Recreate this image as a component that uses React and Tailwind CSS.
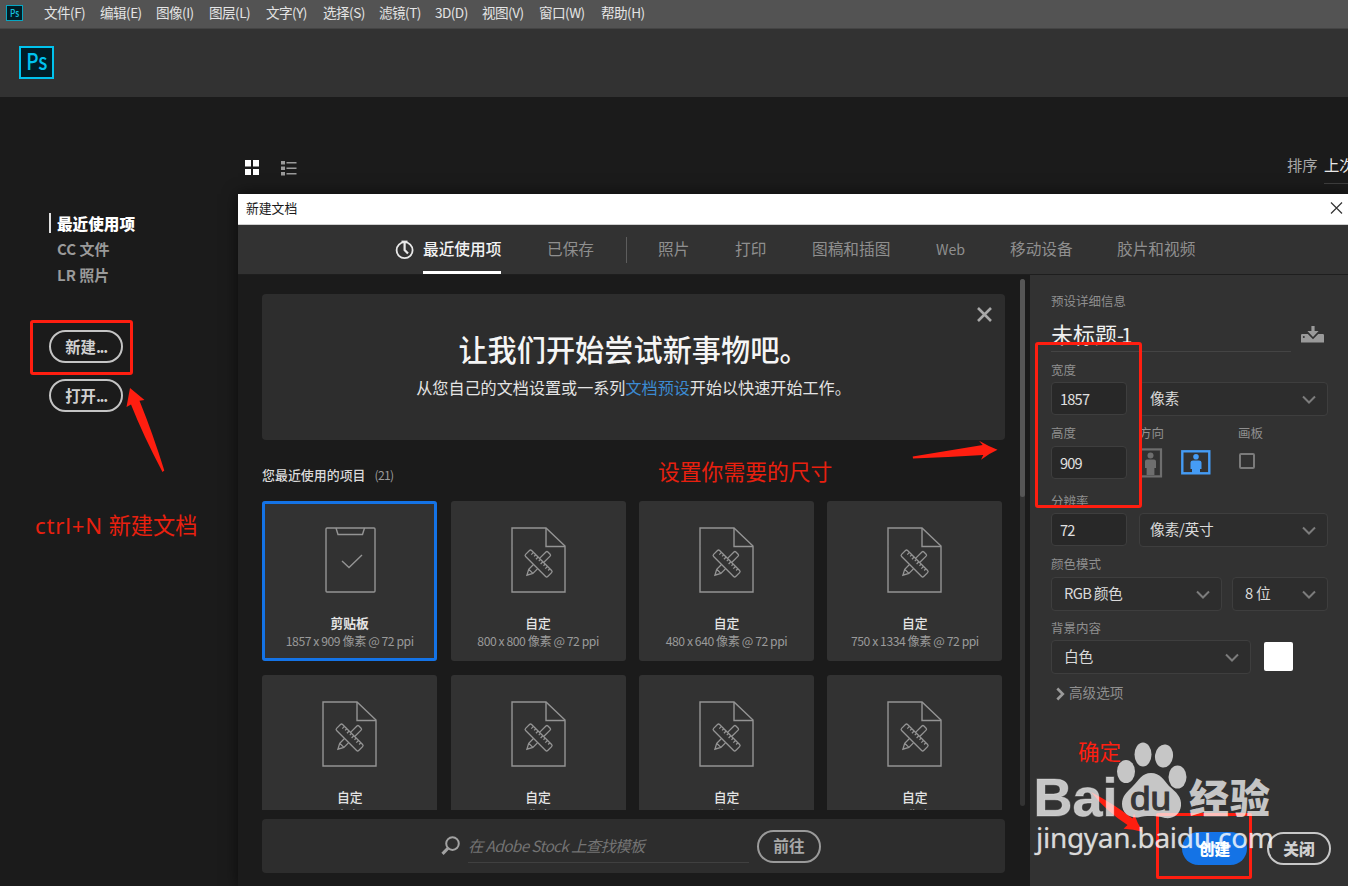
import React from 'react';

const MENU = [
  ['文件(F)', 'w-[56px]'],
  ['编辑(E)', 'w-[56px]'],
  ['图像(I)', 'w-[53px]'],
  ['图层(L)', 'w-[57px]'],
  ['文字(Y)', 'w-[57px]'],
  ['选择(S)', 'w-[56px]'],
  ['滤镜(T)', 'w-[56px]'],
  ['3D(D)', 'w-[47px]'],
  ['视图(V)', 'w-[57px]'],
  ['窗口(W)', 'w-[62px]'],
  ['帮助(H)', 'w-[60px]'],
];

const TABS = [
  ['照片', 'w-[77px]'],
  ['打印', 'w-[77px]'],
  ['图稿和插图', 'w-[124px]'],
  ['Web', 'w-[74px]'],
  ['移动设备', 'w-[107px]'],
  ['胶片和视频', 'w-[90px]'],
];

const CARDS = [
  { name: '剪贴板', size: '1857 x 909 像素 @ 72 ppi', clip: true },
  { name: '自定', size: '800 x 800 像素 @ 72 ppi' },
  { name: '自定', size: '480 x 640 像素 @ 72 ppi' },
  { name: '自定', size: '750 x 1334 像素 @ 72 ppi' },
  { name: '自定', size: '210 x 297 毫米 @ 300 ppi' },
  { name: '自定', size: '800 x 600 像素 @ 72 ppi' },
  { name: '自定', size: '600 x 800 像素 @ 72 ppi' },
  { name: '自定', size: '750 x 1000 像素 @ 72 ppi' },
];

function DocIcon() {
  return (
    <svg className="ml-px" width="56" height="66" viewBox="0 0 56 66" fill="none" stroke="#949494" strokeWidth="1.4">
      <path d="M1 1H35L54 19V65H1Z" />
      <path d="M35 1V19.5H54" />
      <g transform="translate(27.6 36.5) rotate(45) scale(0.92)" strokeWidth="1.4">
        <path d="M-3.2 -5V-14.5Q-3.2 -16 -1.7 -16H1.7Q3.2 -16 3.2 -14.5V-5" />
        <path d="M-3.2 5V12L0 18L3.2 12V5M-3.2 12H3.2M-1 16.5H1" />
        <rect x="-17" y="-4.6" width="34" height="9.2" rx="1.6" />
        <path d="M-12.5 -4.6V-1.2M-8.9 -4.6V-2M-5.3 -4.6V-1.2M-1.7 -4.6V-2M1.9 -4.6V-1.2M5.5 -4.6V-2M9.1 -4.6V-1.2M12.7 -4.6V-2" />
      </g>
    </svg>
  );
}

function ClipIcon() {
  return (
    <svg className="ml-[2px]" width="52" height="66" viewBox="0 0 52 66" fill="none" stroke="#949494" strokeWidth="1.4">
      <rect x="1" y="1" width="49" height="64" rx="1" />
      <path d="M11 1L13 7.5H37.5L39.5 1" />
      <path d="M17 34L24 40.5L37 28" />
    </svg>
  );
}

function Card({ card }) {
  return (
    <div
      className={
        'flex h-[160px] w-[175px] flex-col items-center rounded-[3px] bg-[#323232] pt-[26px] ' +
        (card.clip ? 'shadow-[inset_0_0_0_3px_#1473e6]' : '')
      }
    >
      {card.clip ? <ClipIcon /> : <DocIcon />}
      <div className={'mt-[20px] h-[20px] text-[12.8px] leading-[19px] text-[#e4e4e4] ' + (card.clip ? 'font-bold' : 'font-medium')}>
        {card.name}
      </div>
      <div className="h-[16px] whitespace-nowrap text-[12.2px] leading-[16px] tracking-[-0.45px] text-[#9a9a9a]">{card.size}</div>
    </div>
  );
}

function Chevron() {
  return (
    <svg className="mt-px" width="14" height="9" viewBox="0 0 14 9" fill="none" stroke="#7c7c7c" strokeWidth="2">
      <path d="M1 1.5L7 7.5L13 1.5" />
    </svg>
  );
}

function Select({ children, className }) {
  return (
    <div
      className={
        'flex h-[34px] items-center justify-between whitespace-nowrap rounded-[4px] border border-[#3e3e3e] bg-[#2d2d2d] pr-[11px] text-[14.8px] tracking-[-0.3px] text-[#dadada] ' +
        className
      }
    >
      <span className="pb-px">{children}</span>
      <Chevron />
    </div>
  );
}

function Field({ children }) {
  return (
    <div className="flex h-[33px] w-[76px] items-center rounded-[4px] border border-[#3e3e3e] bg-[#282828] pl-[8px] text-[14.6px] tracking-[-0.8px] text-[#e0e0e0]">
      {children}
    </div>
  );
}

function Label({ children, className = '' }) {
  return <div className={'whitespace-nowrap text-[12.5px] leading-[18px] text-[#8f8f8f] ' + className}>{children}</div>;
}

function Details() {
  return (
    <aside className="flex h-full w-[318px] flex-col bg-[#323232] pl-[21px]">
      <Label className="mt-[17px] h-[18px]">预设详细信息</Label>
      <div className="mt-[8px] flex h-[34px]">
        <div className="h-[34px] w-[240px] border-b border-[#444] text-[22px] leading-[31px] text-[#f0f0f0]">
          未标题<span className="text-[20px] tracking-[-2.8px]">-1</span>
        </div>
        <svg className="ml-[10px] mt-[8px]" width="24" height="17" viewBox="0 0 24 17">
          <path d="M10.4 0H13.6V5H17.6L12 11L6.4 5H10.4Z" fill="#9a9a9a" />
          <path d="M0 9.3Q0 8 1.3 8H6.8L12 13.3L17.2 8H21.8Q23 8 23 9.3V16.5H0Z" fill="#9a9a9a" />
          <circle cx="2.8" cy="11" r="1" fill="#323232" />
        </svg>
      </div>
      <Label className="mt-[9px] h-[18px]">宽度</Label>
      <div className="mt-[3px] flex h-[34px] gap-[12px]">
        <Field>1857</Field>
        <Select className="w-[189px] pl-[10px]">像素</Select>
      </div>
      <div className="mt-[8px] flex h-[18px]">
        <Label className="w-[88px]">高度</Label>
        <Label className="w-[99px]">方向</Label>
        <Label>画板</Label>
      </div>
      <div className="mt-[4px] flex h-[33px]">
        <Field>909</Field>
        <svg className="ml-[12px] mt-[2px]" width="24" height="30" viewBox="0 0 24 30">
          <rect x="1.4" y="1.4" width="20.600" height="27" fill="none" stroke="#6e6e6e" strokeWidth="2.2" />
          <circle cx="11.500" cy="7.500" r="3" fill="#6e6e6e" />
          <path d="M8 11.500H15Q17 11.500 17 13.500V20H15.400V27H7.600V20H6V13.500Q6 11.500 8 11.500Z" fill="#6e6e6e" />
        </svg>
        <svg className="ml-[18px] mt-[4px]" width="30" height="25" viewBox="0 0 30 25">
          <rect x="1.3" y="1.3" width="27" height="22" fill="none" stroke="#459cf5" strokeWidth="2.4" />
          <circle cx="15" cy="6.8" r="2.800" fill="#459cf5" />
          <path d="M12 10.5H18Q20.500 10.5 20.500 12.5V19H19V23H11V19H9.500V12.5Q9.500 10.5 12 10.5Z" fill="#459cf5" />
        </svg>
        <div className="ml-[28px] mt-[7px] h-[16px] w-[16px] rounded-[2px] border-2 border-[#7b7b7b]" />
      </div>
      <Label className="mt-[13px] h-[18px]">分辨率</Label>
      <div className="mt-[3px] flex h-[34px] gap-[12px]">
        <Field>72</Field>
        <Select className="w-[189px] pl-[10px]">像素/英寸</Select>
      </div>
      <Label className="mt-[8px] h-[18px]">颜色模式</Label>
      <div className="mt-[4px] flex h-[34px] gap-[10px]">
        <Select className="w-[171px] pl-[12px]"><span className="tracking-[-0.7px]">RGB 颜色</span></Select>
        <Select className="w-[96px] pl-[12px]">8 位</Select>
      </div>
      <Label className="mt-[8px] h-[18px]">背景内容</Label>
      <div className="mt-[3px] flex h-[34px] gap-[13px]">
        <Select className="w-[200px] pl-[12px]">白色</Select>
        <div className="mt-[2px] h-[29px] w-[29px] rounded-[2px] bg-white" />
      </div>
      <div className="mt-[9px] flex h-[20px] items-center gap-[4px] pl-[5px] text-[13.6px] leading-[20px] text-[#8f8f8f]">
        <svg className="mt-[2px]" width="9" height="14" viewBox="0 0 9 14" fill="none" stroke="#9a9a9a" strokeWidth="2.6">
          <path d="M1.3 1.5L6.8 7L1.3 12.5" />
        </svg>
        <span className="pb-[2px]">高级选项</span>
      </div>
      <div className="mt-[129px] flex gap-[20px] pl-[131px] text-[15.7px] font-black">
        <div className="flex h-[33px] w-[65px] items-center justify-center rounded-full bg-[#1473e6] text-white">创建</div>
        <div className="flex h-[33px] w-[64px] items-center justify-center rounded-full border-2 border-[#c8c8c8] text-[#d0d0d0]">关闭</div>
      </div>
    </aside>
  );
}

function Dialog() {
  return (
    <section className="flex h-[692px] w-[1110px] flex-col bg-[#1b1b1b] shadow-[0_0_14px_rgba(0,0,0,0.6)]">
      <div className="flex h-[31px] items-center justify-between border-b border-[#d0d0d0] bg-white pl-[8px] pr-[5px] text-[12.8px] text-[#1a1a1a]">
        <span className="pb-[2px]">新建文档</span>
        <svg className="mb-[2px]" width="13" height="12" viewBox="0 0 13 12" stroke="#333" strokeWidth="1.2">
          <path d="M1 .5L12 11.5M12 .5L1 11.5" />
        </svg>
      </div>
      <div className="flex h-[50px] border-b border-[#1e1e1e] bg-[#323232] text-[15.7px] leading-[48px] text-[#8f8f8f]">
        <svg className="ml-[157px] mt-[15px]" width="20" height="20" viewBox="0 0 20 20" fill="none" stroke="#e8e8e8" strokeWidth="1.8">
          <circle cx="9.600" cy="10.2" r="8" />
          <path d="M9.600 3V10L13 13.6" strokeWidth="2.200" />
          <path d="M6.500 1.500H12.500" />
        </svg>
        <div className="ml-[8px] h-[49px] w-[78px] whitespace-nowrap border-b-[3px] border-white font-medium text-[#f2f2f2]">最近使用项</div>
        <div className="ml-[46px] w-[79px] whitespace-nowrap">已保存</div>
        <div className="mt-[12px] h-[26px] w-px bg-[#5d5d5d]" />
        <div className="ml-[31px] flex whitespace-nowrap">
          {TABS.map(([t, w]) => (
            <div key={t} className={w + (t === 'Web' ? ' text-[14.2px]' : '')}>{t}</div>
          ))}
        </div>
      </div>
      <div className="flex h-[611px]">
        <div className="w-[767px] pl-[24px]">
          <div className="mt-[19px] flex h-[146px] w-[743px] flex-col items-center rounded-[4px] bg-[#2d2d2d]">
            <svg className="mr-[13px] mt-[13px] self-end" width="15" height="15" viewBox="0 0 15 15" stroke="#a8a8a8" strokeWidth="2.6">
              <path d="M1 1L14 14M14 1L1 14" />
            </svg>
            <h1 className="mt-[6px] h-[40px] whitespace-nowrap text-[29.2px] font-medium leading-[40px] text-[#f5f5f5]">让我们开始尝试新事物吧。</h1>
            <p className="mt-[8px] h-[22px] whitespace-nowrap text-[16.1px] leading-[22px] text-[#e4e4e4]">
              从您自己的文档设置或一系列<span className="text-[#3b8bd2]">文档预设</span>开始以快速开始工作。
            </p>
          </div>
          <div className="mt-[25px] flex h-[20px] items-center gap-[9px]">
            <span className="text-[12.95px] font-medium text-[#dadada]">您最近使用的项目</span>
            <span className="pt-px text-[12.2px] tracking-[-0.7px] text-[#9a9a9a]">(21)</span>
          </div>
          <div className="mt-[16px] grid h-[309px] w-[741px] grid-cols-[repeat(4,175px)] content-start gap-x-[13.4px] gap-y-[13.5px] overflow-hidden pl-[0.2px]">
            {CARDS.map((c, i) => (
              <Card key={i} card={c} />
            ))}
          </div>
          <div className="mt-[9px] flex h-[54px] w-[743px] items-center rounded-[4px] bg-[#2d2d2d] pl-[179px]">
            <svg width="20" height="20" viewBox="0 0 20 20" fill="none" stroke="#a2a2a2">
              <circle cx="11.500" cy="7.6" r="6.3" strokeWidth="2" />
              <path d="M7.2 12L1.5 17.8" strokeWidth="3.2" />
            </svg>
            <div className="mb-px ml-[7px] h-[34px] w-[281px] whitespace-nowrap border-b border-[#404040] text-[15.4px] italic leading-[33px] tracking-[-0.65px] text-[#737373]">
              在 Adobe Stock 上查找模板
            </div>
            <div className="ml-[8px] flex h-[33px] w-[64px] items-center justify-center rounded-full border-2 border-[#9a9a9a] text-[15.7px] font-bold text-[#a8a8a8]">前往</div>
          </div>
        </div>
        <div className="ml-[15px] mr-[5px] mt-[4px] h-[527px] w-[5px] rounded-full bg-[#333]">
          <div className="h-[218px] rounded-full bg-[#565656]" />
        </div>
        <Details />
      </div>
    </section>
  );
}

function Annotations() {
  return (
    <>
      <div className="absolute left-[30px] top-[320px] h-[55px] w-[103px] rounded-[3px] border-[3px] border-[#ff1e10]" />
      <div className="absolute left-[1035px] top-[342px] h-[166px] w-[107px] rounded-[3px] border-[3px] border-[#ff1e10]" />
      <div className="absolute left-[1156px] top-[813px] h-[66px] w-[96px] rounded-[2px] border-[3px] border-[#ff1e10]" />
      <div className="absolute left-[35px] top-[510px] whitespace-nowrap font-['Noto_Sans','Noto_Sans_CJK_SC',sans-serif] text-[22.2px] leading-[32px] text-[#e8200f]">
        <span className="tracking-[0.8px]">ctrl+N</span> 新建文档
      </div>
      <div className="absolute left-[658px] top-[455px] whitespace-nowrap text-[21.8px] leading-[32px] text-[#e8200f]">设置你需要的尺寸</div>
      <div className="absolute left-[1078px] top-[735px] whitespace-nowrap text-[21.5px] leading-[32px] text-[#ff1e10]">确定</div>
      <svg className="absolute left-0 top-0" width="1348" height="886" viewBox="0 0 1348 886">
        <g fill="#ff1e10">
          <path d="M130 388L144.500 400L139.500 400.700Q153 434 164.300 470.500L162.500 472Q143 435 131 404.500L126.500 407Z" />
          <path d="M912.700 456.500L982.700 445L979 440.700Q988 446 997.500 449.700Q988 454 981 459.700L983.300 455Q948 457 913 458.500Z" />
          <path d="M1091 792Q1114 804 1132.500 818.500L1134 813.500Q1137 823 1143 832Q1133 829 1123.500 828.800L1127.500 825Q1107 812 1091 792Z" />
        </g>
        <g fill="#fff" fillOpacity="0.72">
          <text x="1033.500" y="816" fontSize="53" fontWeight="700" textLength="84" lengthAdjust="spacingAndGlyphs" fontFamily="Liberation Sans, sans-serif" stroke="#fff" strokeOpacity="0.3">Bai</text>
          <ellipse cx="1126" cy="771.500" rx="9" ry="11.500" />
          <ellipse cx="1143" cy="754.500" rx="8.500" ry="12" />
          <ellipse cx="1164" cy="756" rx="9" ry="11.500" transform="rotate(8 1164 756)" />
          <ellipse cx="1177.500" cy="777" rx="9" ry="11.500" />
          <path d="M1151 773C1160 773 1164 780 1169 786C1176 792 1182 797 1181 806C1180 814 1174 819 1165 818C1155 815.500 1147 815.500 1138 817.500C1129 818 1122 813 1122 804C1122 796 1127 792 1133 786C1139 780 1142 773 1151 773Z" />
          <text x="1189" y="813" fontSize="40" fontWeight="900" textLength="81" fontFamily="Noto Sans CJK SC, sans-serif">经验</text>
          <text x="1036" y="848" fontSize="28" textLength="238" fontFamily="Noto Sans, sans-serif" fillOpacity="0.82" stroke="#fff" strokeOpacity="0.35" strokeWidth="0.6">jingyan.baidu.com</text>
        </g>
        <text x="1130" y="810" fontSize="34" textLength="41" lengthAdjust="spacingAndGlyphs" fill="#363636" stroke="#363636" strokeWidth="1.100" fontFamily="Liberation Sans, sans-serif">du</text>
      </svg>
    </>
  );
}

export default function App() {
  return (
    <div className="relative flex h-[886px] w-[1348px] flex-col overflow-hidden bg-[#1b1b1b] font-['Noto_Sans_CJK_SC',sans-serif]">
      <header className="flex h-[29px] items-center border-b border-[#444] bg-[#535353] pl-[6px] text-[13.6px] text-[#e4e4e4]">
        <div className="mb-[2px] mr-[21px] flex h-[16px] w-[17px] items-center justify-center border border-[#07a6c2] bg-[#001d26] text-[10px] font-medium leading-none text-[#18c3e0]">
          <span className="scale-x-[0.82]">Ps</span>
        </div>
        {MENU.map(([t, w]) => (
          <div key={t} className={'whitespace-nowrap pb-[4px] tracking-[-0.55px] ' + w}>{t}</div>
        ))}
      </header>
      <div className="flex h-[68px] bg-[#323232] pl-[19px] pt-[17px]">
        <div className="flex h-[33px] w-[35px] items-center justify-center border-2 border-[#00c3ee] bg-[#001d26] pb-[4px] text-[23px] font-medium leading-none text-[#00c3ee]">
          <span className="scale-x-[0.83]">Ps</span>
        </div>
      </div>
      <main className="flex h-[789px]">
        <nav className="flex w-[238px] shrink-0 flex-col pl-[49px] pt-[113px] text-[15.6px] font-bold leading-[26px] text-[#9a9a9a]">
          <div className="flex h-[26px] items-center gap-[6px] font-black text-white">
            <div className="mb-px h-[20px] w-[2px] bg-[#e0e0e0]" />
            最近使用项
          </div>
          <div className="h-[26px] pl-[8px] text-[15px]">CC 文件</div>
          <div className="h-[26px] pl-[8px] text-[15px]">LR 照片</div>
          <div className="mt-[42px] flex h-[33px] w-[74px] items-center justify-center rounded-full border-2 border-[#c4c4c4] pb-[2px] text-[15.4px] text-[#d0d0d0]">
            新建<span className="tracking-[-1.4px]">...</span>
          </div>
          <div className="mt-[16px] flex h-[33px] w-[74px] items-center justify-center rounded-full border-2 border-[#c4c4c4] pb-[2px] text-[15.4px] text-[#d0d0d0]">
            打开<span className="tracking-[-1.4px]">...</span>
          </div>
        </nav>
        <div className="flex w-[1110px] flex-col">
          <div className="flex h-[97px] pl-[7px]">
            <svg className="mt-[63px] shrink-0" width="15" height="16" viewBox="0 0 15 16" fill="#fff">
              <path d="M0 0H6V6.500H0ZM8 0H14V6.500H8ZM0 9H6V15H0ZM8 9H14V15H8Z" />
            </svg>
            <svg className="ml-[21px] mt-[64px] shrink-0" width="16" height="15" viewBox="0 0 16 15" fill="#9a9a9a">
              <path d="M0 0H4V3.500H0ZM0 5.500H4V9H0ZM0 11H4V14.500H0ZM5.500 1H15.500V2.500H5.500ZM5.500 6.500H15.500V8H5.500ZM5.500 12H15.500V13.500H5.500Z" />
            </svg>
            <div className="ml-[990px] mt-[55px] h-[24px] w-[37px] shrink-0 whitespace-nowrap text-[15.3px] leading-[24px] text-[#a8a8a8]">排序</div>
            <div className="mt-[55px] h-[32px] w-[24px] shrink-0 overflow-hidden whitespace-nowrap border-b border-[#3e3e3e] text-[15.3px] leading-[24px] text-[#e8e8e8]">上次</div>
          </div>
          <Dialog />
        </div>
      </main>
      <Annotations />
    </div>
  );
}
